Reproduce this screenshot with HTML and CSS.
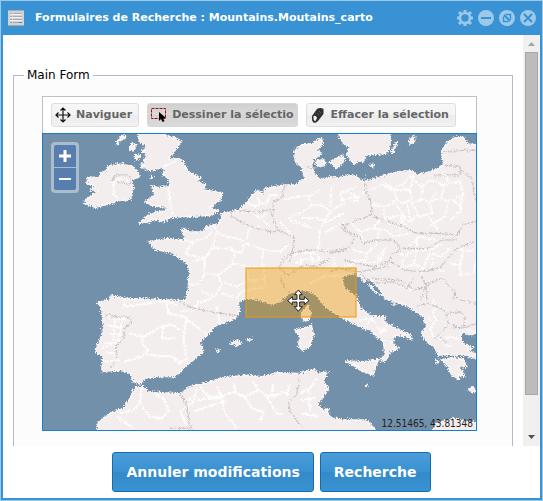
FILE: index.html
```html
<!DOCTYPE html>
<html lang="fr">
<head>
<meta charset="utf-8">
<title>Formulaires de Recherche</title>
<link rel="stylesheet" href="styles.css">
</head>
<body>
<main class="window">
  <header class="titlebar">
    <svg class="form-icon" viewBox="0 0 16 16" aria-hidden="true">
      <rect width="16" height="16" fill="#cfd3d5"/>
      <path d="M0 .5h16" stroke="#aaa"/>
      <path d="M2 3.500h2M2 6.500h2M2 9.500h2M2 12.500h2" stroke="#8fa3b0"/>
      <path d="M5 3.500h9M5 6.500h9M5 9.500h9M5 12.500h6" stroke="#a4aaad"/>
      <path d="M2 4.500h12M2 7.500h12M2 10.500h12" stroke="#f4f4f4"/>
      <path d="M11 12.500h3" stroke="#3b91d4"/>
      <path d="M0 15.500h16" stroke="#a9a59a"/>
    </svg>
    <h1 class="title">Formulaires de Recherche : Mountains.Moutains_carto</h1>
    <div class="tools">
      <button class="tool" type="button" aria-label="Options"><svg viewBox="0 0 16 16"><g fill="none" stroke="currentColor"><circle cx="8" cy="8" r="5" stroke-width="2.600"/><path stroke-width="3" d="M8 0v3M8 13v3M0 8h3M13 8h3M2 2l2.500 2.500M11.500 11.500l2.500 2.500M2 14l2.500-2.500M11.500 4.500l2.500-2.500"/></g></svg></button>
      <button class="tool" type="button" aria-label="Réduire"><svg viewBox="0 0 16 16"><circle cx="8" cy="8" r="8" fill="currentColor"/><path d="M3 8h10" stroke="#3892d3" stroke-width="2"/></svg></button>
      <button class="tool" type="button" aria-label="Agrandir"><svg viewBox="0 0 16 16"><circle cx="8" cy="8" r="8" fill="currentColor"/><path d="M5 5l6 6" stroke="#3892d3" stroke-width="2"/><path d="M6.500 4.500h5v5M4.500 6.500v5h5" fill="none" stroke="#3892d3" stroke-width="1.400"/></svg></button>
      <button class="tool" type="button" aria-label="Fermer"><svg viewBox="0 0 16 16"><circle cx="8" cy="8" r="8" fill="currentColor"/><path d="M4 4l8 8M12 4l-8 8" stroke="#3892d3" stroke-width="2"/></svg></button>
    </div>
  </header>

  <div class="viewport">
    <form class="content" id="search">
      <fieldset class="group">
        <legend>Main Form</legend>
        <div class="map-panel">
          <div class="toolbar">
            <button class="tb" type="button"><svg viewBox="0 0 16 16"><path d="M8 1v14M1 8h14M5.500 3.500L8 1l2.500 2.500M5.500 12.500L8 15l2.500-2.500M3.500 5.500L1 8l2.500 2.500M12.500 5.500L15 8l-2.500 2.500" fill="none" stroke="#111" stroke-width="1.200"/></svg>Naviguer</button>
            <button class="tb tb-active" type="button"><svg viewBox="0 0 16 16"><rect x=".5" y="1.500" width="14" height="10" fill="none" stroke="#a00c0c" stroke-dasharray="3 1"/><path d="M8 5v9l2-2 1.500 3 2-1-1.500-3h3z" fill="#000"/></svg>Dessiner la sélectio</button>
            <button class="tb" type="button"><svg viewBox="0 0 16 16"><path d="M2 9l5-7q3-2 6.500 0v5L8 14q-2 2.500-4.500 1.500-2-1-1.500-6.500z" fill="#303030"/><path d="M3.500 9q2.500-1 3.500 2l-1.500 3q-2.500 0-2-5z" fill="#f4f4f4"/><path d="M7 6l2 2M9 4l2 2" stroke="#777" stroke-width=".6"/></svg>Effacer la sélection</button>
          </div>
          <div class="map">
            <svg class="map-canvas" viewBox="129 402 1299 888" role="img" aria-label="Carte de l'Europe">
              <defs>
                <filter id="coast" x="-5%" y="-5%" width="110%" height="110%">
                  <feTurbulence type="fractalNoise" baseFrequency=".22" numOctaves="3" seed="4" result="n"/>
                  <feDisplacementMap in="SourceGraphic" in2="n" scale="16" xChannelSelector="R" yChannelSelector="G"/>
                </filter>
              </defs>
              <rect x="120" y="390" width="1320" height="910" fill="#7390ab"/>
              <g filter="url(#coast)">
                <g fill="#f4eded" stroke="#fbf7f7" stroke-width="4" stroke-linejoin="round">
                  <path d="M265 530L280 532 305 528 300 518 317 515 325 498 355 492 395 498 415 515 418 530 395 540 400 560 395 585 388 600 355 602 335 610 285 622 270 615 252 610 260 598 295 570 270 570 285 558 260 550Z"/>
                  <path d="M410 395L420 425 440 440 425 452 440 465 432 485 432 505 455 512 485 502 495 510 488 525 505 535 510 560 470 562 455 558 465 585 435 605 460 618 505 622 495 633 470 635 445 645 417 670 445 668 465 658 490 665 510 652 590 648 635 646 655 632 630 622 662 600 665 578 610 570 618 555 590 542 602 535 565 515 552 490 540 475 505 478 545 425 520 412 490 405 500 395Z"/>
                  <path d="M362 410l18-4-6 10-22 10zM394 430l14 5-8 18-12-8zM404 462l18 6-14 12zM424 490l10 6-10 8zM452 526l8 4-6 6zM350 428l8 2-6 6z"/>
                  <path d="M885 450L905 435 940 430 965 413 967 435 950 450 965 460 940 480 935 500 945 520 960 540 990 530 1010 533 1055 525 1070 530 1090 545 1110 540 1150 528 1190 515 1235 512 1250 525 1290 515 1315 505 1330 495 1325 450 1340 430 1365 410 1390 412 1405 432 1440 435V990L1390 995 1380 1005 1390 1030 1420 1045 1400 1052 1425 1060 1435 1078 1390 1065 1320 1065 1305 1045 1280 1025 1265 1000 1280 980 1270 950 1240 930 1215 915 1155 895 1140 870 1112 838 1100 835 1095 850 1080 830 1065 820 1025 830 1030 860 1060 885 1070 890 1080 925 1120 950 1155 950 1150 965 1230 1005 1235 1020 1215 1010 1185 1005 1175 1025 1195 1045 1170 1055 1155 1085 1140 1080 1155 1065 1150 1025 1130 1010 1115 995 1070 975 1030 955 990 930 975 920 950 885 920 870 890 872 860 885 840 905 810 912 780 900 740 895 715 905 718 935 705 955 650 975 600 1025 610 1055 580 1080 540 1115 520 1130 470 1130 435 1135 420 1152 400 1145 390 1120 360 1110 305 1115 308 1070 285 1055 305 1005 310 975 305 925 292 908 325 900 335 888 380 895 460 898 555 902 565 870 565 840 570 815 560 790 540 775 520 760 465 748 445 725 505 715 555 722 545 688 560 688 565 696 610 695 620 680 658 670 665 640 720 630 770 570 790 585 795 565 850 555 890 555 900 540 915 540 905 500 885 485Z"/>
                  <path d="M290 1300L295 1265 330 1240 370 1225 390 1195 405 1160 430 1160 445 1175 540 1182 570 1160 615 1150 660 1135 740 1125 785 1130 830 1118 900 1120 940 1108 955 1120 985 1115 970 1140 985 1170 950 1215 985 1240 990 1250 1020 1260 1100 1260 1135 1300ZM1290 1300L1310 1270 1360 1255 1440 1270V1300Z"/>
                  <path d="M902 940L925 915 933 945 920 965 905 955ZM885 990L910 985 935 976 940 1005 930 1040 905 1052 895 1040 900 1010ZM1035 1083L1090 1085 1135 1078 1120 1125 1090 1115ZM1325 1080L1360 1072 1390 1078 1400 1102 1375 1098 1395 1130 1375 1125 1375 1140 1355 1125 1345 1102Z"/>
                  <path d="M1010 395L1030 430 1050 440 1040 465 1060 490 1090 485 1100 465 1160 460 1170 440 1172 395ZM1188 426l-16 34 6 0 14-30zM990 485L1030 465 1035 480 1010 505zM945 485l25-8 8 18-22 6zM1230 415l15-7-5 20-12 4zM1110 492l14 2-6 8z"/>
                  <path d="M690 1030l24-10 10 10-14 8zM740 1016l16 2-8 4zM648 1050l14 2-10 4zM1405 1170l12-10 12 12-14 4zM1310 1055l8 8-2 6zM1308 1078l10 6-6 8zM975 1228l10-2-2 8zM1100 1155l4 2-4 2zM1385 998l20-8 30 6-10 8-20 0z"/>
                  <path d="M1105 850l30 30-6 0-26-24zM1130 878l60 25 20 10-40-12zM1170 908l20 4-8 2z" stroke-width="2"/>
                </g>
                <g fill="none" stroke="#fff" stroke-width="4" stroke-linejoin="round">
                  <path d="M335 550l25-15 25 8M340 545l2 40 14 10M490 500l40-18M505 560l4 40 8 45"/>
                  <path d="M540 720l40 5 40-12 20-25M640 675l20 30 50 10 24 10-10 35-45-15-40 0 11-50M580 725l-25 35 60 15 24-35M615 775l-35 10M690 740l15 25-10 30-40 30-45-5 5-45M615 820l-20 35-30 0M655 825l10 30M695 790l55 10 35 0 5-50-50-20M740 720l5-30 35-12M785 750l55 5 25-20M790 790l5 45-50 10-5-50M660 845l50 15 30-15M595 870l50 20 20-35M665 880l45 15 15-20 70-15 0-30M640 890l-40 20"/>
                  <path d="M850 600l30-8 45-5 10 30-30 20-45 20M925 590l35-20M935 617l30-2 25 20-15 25-30-5-40 0M975 660l-15 30-5 60-45 10M990 635l40-25-10-30 50-20M870 660l35 10 30 15M1020 600l60-10 20-20M1030 640l-60 30M1050 580l24 10 0 12-20 0M840 665l30 35M995 560l-5 60M1032 668l-60 30M880 770l25-18 35 8 30 22M885 790l30-14 45 4M900 770l6 25M930 760l10 30M745 610l20 10 20-12M770 590l10 20 20 0 10-25 25 0M725 640l30-5 25 20 20-15M790 660l15 20"/>
                  <path d="M1110 570l35-15 30 15 30-20M1150 545l30 25 15 35-45 15 5 35 45-10 20 35M1105 610l45 10M1180 570l50 0 10-45M1230 570l5 30-35 10M1205 560l25-30 40 35-10 35-25 10 20 30-20 25-30-10M1260 565l30-25 40 15-5 40-45 10-20-10M1320 555l60-10 10 40-45 20-20-10M1290 600l5 40-40 10M1345 605l-10 45-50 30M1385 585l-5 50-30 25M1210 640l-10 50M1170 650l0 25M1285 650l30 40M1220 600l10 60M1180 600l40 60M1345 545l-15-30M1310 575l-25 40M1360 600l30 30"/>
                  <path d="M1050 665l30 30 40-10 20-25M1080 695l10 30M1120 685l40 5 20 20 50-10M1140 690l-10 40M1060 750l40 10 30-25M1100 760l-5 30 40-5 20-30M1050 785l40-5M1160 740l-30 35M1190 755l25 15 30-20 40 0 45-20M1210 775l-5 30 35-10 10-45M1240 790l30 15 20-45 35 10 30-30M1270 805l-10 20M1300 775l-5 30 40 10M1370 745l40 10 20-15M1350 790l30 5 10-50M1380 795l0 30 40-5 10-40M1225 740l30-30 50 10M1250 715l0 25"/>
                  <path d="M980 800l40 5 40-12M1000 770l10 50M930 850l40-20 50-5M1200 860l40 10M1300 900l8 20-10 20 12 20-20 25 10 25M1280 950l20 15M1285 1010l30 0M1320 1020l30-10 30 10M1330 1035l30 5M1080 960l30-5 20 15M1100 975l20-25M1130 985l30 10M1160 975l-20 25M1170 1025l15-5M1060 1090l20 15"/>
                </g>
                <g fill="none" stroke="#fff" stroke-width="5" stroke-linejoin="round">
                  <path d="M375 895l-5 25 40-5 50-7 45-5M500 905l5 35 45 10M385 1000l45 10 30-15 30-18 30-2 20 15M425 1010l5 25 15 15-20 20-55 15M490 980l-5 35 40 0M445 1065l75 5 15 20 30-15M560 950l-10 60 10 60M600 900l-20 30-40 5M550 950l40 30 30 20M650 920l10 55M530 915l-25-10"/>
                  <path d="M320 950l30 10 35-5M325 975l40 10M320 1000l45 5M310 1030l50 0M315 1055l45 10M310 1085l50-5M345 960l-5 50 10 50M365 970l-10 60M305 1045l35-15" stroke-width="4"/>
                  <path d="M425 1165l-5 45-20 20-40 10M420 1210l30 40 35 5 20-20-15-40-30-15M350 1250l50 35M590 1165l-10 40-40 30 20 40M600 1160l25 30 40 0 10 50 35 45M650 1160l15 30 30-15 40 15 40-20 30 20 60-15M735 1190l20 35 35 10-10 30M800 1190l30 50 20 5M700 1150l10 30M760 1145l15 25M820 1150l-5 40M870 1150l-10 40M900 1180l30-15 20-30M900 1200l45-5M925 1165l5 70M905 1240l50 10M560 1200l100-5M580 1235l100-35"/>
                </g>
                <g fill="none" stroke="#c6bfc1" stroke-width="3" stroke-linejoin="round">
                  <path d="M335 545l10-20 35 0 20 15-10 12-40-5M700 635l-10 10 40 25 40 15 50 12 15-8 50 25-15 70M720 632l50 5 40-10 15 40 5 20M820 635l0-30 25-10 10-40M865 760l70-10 50 5 60-10 20-35-38-20 15-18 60-22 14-10-4-40-15-25 0-50M870 760l-30 30 0 20 25 15 45-30 40 5 40-25M1122 650l45 15 45 15 35 20 60 0 65 5 15-30 40-10M1025 670l20 25 35 15 12 20 30-10 55 0 20 15 0 20-20 5-10 25-50 15-85-20M990 760l50-10M1205 745l80 0 40-25 45 0M1170 785l45 25 45 5 60-10 45-55 30-15 30-10M920 500l30 5M1330 455l80-5 20 3M1330 495l50 5 0 25-80 0M1380 500l10 15 30 25 0 35 10 30M990 815l30-10 60 10 85-15M1080 820l40 30 60-5 40 20 20-30M1110 835l90 5 40 30 40-10 0 50-30 10M1260 900l25-50 40-15 40 40-5 30M1280 860l-20-40M1285 910l35 15 20 15 5 35-20 20-20 20M1340 940l40-5 15 15-5 30-40 5M1345 970l40 15 50-15M1320 1010l20 20M1360 880l20 20 50 10"/>
                  <path d="M315 945l40 5 35 3 5 15-20 15-5 40-20 10 0 45-20 25M540 902l30 20 70 15 70 10M840 830l15 35 20 15M540 1182l20 30 8 60 10 20M900 1120l-10 65-25 20 5 30 35 45M545 1185l10 25M510 1285l60 0"/>
                </g>
              </g>
              <rect class="selection" x="738" y="804" width="330" height="147"/>
              <path d="M895 870L907 884H899V898H913V890L927 902 913 914V906H899V920H907L895 934 883 920H891V906H877V914L863 902 877 890V898H891V884H883Z" fill="#fff" stroke="#222" stroke-width="3"/>
            </svg>
            <div class="zoom">
              <button class="zoom-in" type="button" aria-label="Zoom avant"><svg viewBox="0 0 12 12"><path d="M6 0v12M0 6h12" stroke="#fff" stroke-width="3"/></svg></button>
              <button class="zoom-out" type="button" aria-label="Zoom arrière"><svg viewBox="0 0 12 12"><path d="M0 6h12" stroke="#fff" stroke-width="2"/></svg></button>
            </div>
            <output class="coords">12.51465, 43.81348</output>
          </div>
        </div>
      </fieldset>
    </form>
    <div class="scrollbar" aria-hidden="true">
      <svg class="arrow" viewBox="0 0 17 17"><path d="M5 11h7L8.500 7z" fill="#a3a3a3"/></svg>
      <div class="track"><div class="thumb"></div></div>
      <svg class="arrow" viewBox="0 0 17 17"><path d="M5 6h7L8.500 10z" fill="#505050"/></svg>
    </div>
  </div>

  <footer class="actions">
    <button class="primary" type="reset" form="search">Annuler modifications</button>
    <button class="primary" type="submit" form="search">Recherche</button>
  </footer>
</main>
</body>
</html>
```
FILE: styles.css
```css
* { box-sizing: border-box; }

body {
  margin: 0;
  font-family: "DejaVu Sans", Verdana, sans-serif;
  font-size: 12px;
}

button { font-family: inherit; cursor: pointer; }

.window {
  display: flex;
  flex-direction: column;
  height: 100vh;
  border: 1px solid #9ac8e9;
  background: #3892d3;
  padding: 0 2px 2px;
}

.titlebar {
  display: flex;
  align-items: center;
  flex: none;
  height: 34px;
  padding: 0 4px 0 5px;
  gap: 11px;
}

.form-icon { width: 16px; height: 16px; flex: none; }

.title {
  flex: 1;
  margin: 0;
  font-size: 11px;
  line-height: 16px;
  color: #fff;
  white-space: nowrap;
}

.tools { display: flex; gap: 5px; }

.tool {
  width: 16px;
  height: 16px;
  padding: 0;
  border: 0;
  background: none;
  color: #9cc8e9;
}

.tool svg, .tb svg, .zoom svg { display: block; }

.viewport {
  display: flex;
  flex: 1;
  min-height: 0;
  background: #fff;
}

.content {
  flex: 1;
  min-width: 0;
  overflow: hidden;
  padding: 32px 10px 0;
}

.group {
  margin: 0;
  min-width: 0;
  border: 1px solid #b5b8c8;
  padding: 13px 35px 40px 28px;
  background: #fcfcfc;
}

.group legend {
  margin-left: -18px;
  padding: 0 3px;
  line-height: 16px;
  color: #000;
}

.map-panel {
  border: 1px solid #c0c0c0;
  border-bottom: 0;
  background: #fff;
}

.toolbar {
  display: flex;
  align-items: center;
  gap: 8px;
  height: 36px;
  padding: 0 8px;
}

.tb {
  display: flex;
  align-items: center;
  gap: 5px;
  height: 24px;
  padding: 0 6px 0 3px;
  border: 1px solid #dedede;
  border-radius: 3px;
  background: linear-gradient(#f7f7f7, #f3f3f3 50%, #ebebeb 50%, #f3f3f3);
  color: #666;
  font-size: 11px;
  font-weight: bold;
  line-height: 16px;
  white-space: nowrap;
}

.tb svg { width: 16px; height: 16px; flex: none; }

.tb-active {
  padding-right: 3px;
  border-color: #d6d6d6;
  background: linear-gradient(#d0d0d0, #dadada 50%, #d3d3d3 50%, #dadada);
}

.map {
  position: relative;
  margin: 0 -1px;
  border: 1px solid #157fcc;
}

.map-canvas { display: block; width: 100%; }

.selection {
  fill: #ee9900;
  fill-opacity: .4;
  stroke: #ee9900;
  stroke-width: 3;
}

.zoom {
  position: absolute;
  left: 8px;
  top: 8px;
  display: flex;
  flex-direction: column;
  gap: 1px;
  padding: 3px;
  border-radius: 4px;
  background: rgba(255, 255, 255, .4);
}

.zoom button {
  display: grid;
  place-items: center;
  width: 22px;
  height: 22px;
  padding: 0;
  border: 0;
  background: #587eb0;
}

.zoom svg { width: 12px; height: 12px; }
.zoom-in { border-radius: 2px 2px 0 0; }
.zoom-out { border-radius: 0 0 2px 2px; }

.coords {
  position: absolute;
  right: 3px;
  bottom: 0;
  font-family: "DejaVu Sans Condensed", "DejaVu Sans", sans-serif;
  font-size: 10px;
  line-height: 12px;
  color: #222;
}

.scrollbar {
  display: flex;
  flex-direction: column;
  flex: none;
  width: 17px;
  background: #f0f0f0;
}

.arrow { display: block; width: 17px; height: 17px; flex: none; }
.track { flex: 1; padding: 0 2px; }

.thumb {
  height: 91%;
  border: 1px solid #a8a8a8;
  background: #bcbcbc;
}

.actions {
  display: flex;
  justify-content: center;
  flex: none;
  gap: 6px;
  padding: 6px 0;
  background: #fff;
}

.primary {
  height: 40px;
  padding: 0 13px;
  border: 1px solid #126daf;
  border-radius: 3px;
  background: linear-gradient(#4b9cd7, #3892d3 50%, #358ac8 51%, #3892d3);
  color: #fff;
  font-size: 14px;
  font-weight: bold;
  line-height: 20px;
  white-space: nowrap;
}
```
